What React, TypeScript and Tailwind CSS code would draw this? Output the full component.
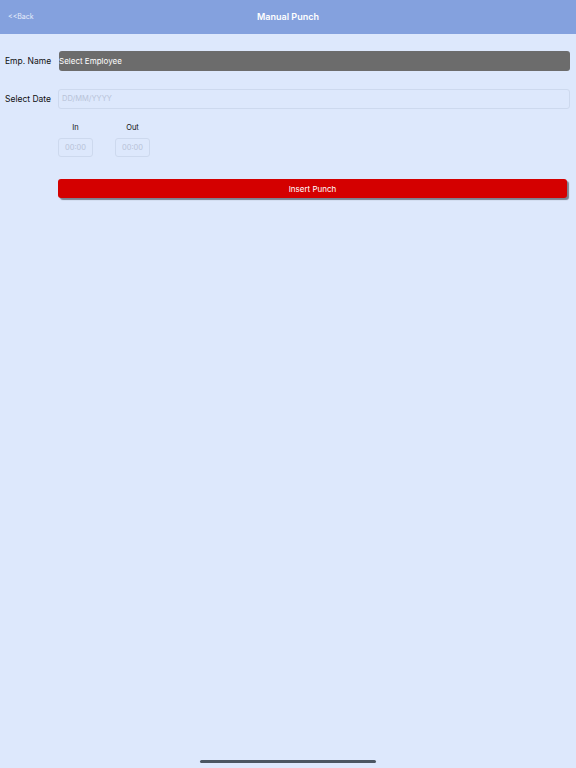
export default function App() {
  return (
    <div
      className="relative w-[576px] h-[768px] bg-[#dde8fc] overflow-hidden"
      style={{ fontFamily: "Inter, 'Noto Sans', sans-serif" }}
    >
      {/* header */}
      <div className="h-[34px] bg-[#84a1de] flex items-center relative">
        <span className="absolute left-[8px] text-[7px] text-[#e6ecfa]">&lt;&lt;Back</span>
        <span className="w-full text-center text-[9px] font-semibold text-white">Manual Punch</span>
      </div>

      <div className="pt-[17px] pr-[6px]">
        {/* emp name */}
        <div className="flex items-center h-[20px]">
          <span className="w-[58px] pl-[5px] text-[8.5px] text-[#111]">Emp. Name</span>
          <div className="flex-1 h-[20px] ml-[1px] rounded-[3px] bg-[#6c6c6c] flex items-center text-[8px] text-white">
            Select Employee
          </div>
        </div>

        {/* date */}
        <div className="flex items-center h-[20px] mt-[18px]">
          <span className="w-[58px] pl-[5px] text-[8.5px] text-[#111]">Select Date</span>
          <div className="flex-1 h-[20px] rounded-[3px] border border-[#cdd9ee] flex items-center pl-[3px] text-[7.5px] text-[#b8c3d8]">
            DD/MM/YYYY
          </div>
        </div>

        {/* in/out */}
        <div className="flex ml-[58px] mt-[13px] gap-[22px]">
          <div className="flex flex-col items-center w-[35px]">
            <span className="text-[7.5px] text-[#111] h-[11px]">In</span>
            <div className="mt-[5px] w-[35px] h-[19px] rounded-[3px] border border-[#cdd9ee] flex items-center justify-center text-[7.5px] text-[#b8c3d8]">
              00:00
            </div>
          </div>
          <div className="flex flex-col items-center w-[35px]">
            <span className="text-[7.5px] text-[#111] h-[11px]">Out</span>
            <div className="mt-[5px] w-[35px] h-[19px] rounded-[3px] border border-[#cdd9ee] flex items-center justify-center text-[7.5px] text-[#b8c3d8]">
              00:00
            </div>
          </div>
        </div>

        {/* button */}
        <div className="ml-[58px] mr-[3px] mt-[22px] h-[19px] rounded-[3px] bg-[#d40000] shadow-[2px_2px_1px_#7b8190] flex items-center justify-center text-[8px] text-white">
          Insert Punch
        </div>
      </div>

      <div className="absolute left-[200px] top-[760px] w-[176px] h-[3px] rounded-full bg-[#4b5662]" />
    </div>
  );
}
